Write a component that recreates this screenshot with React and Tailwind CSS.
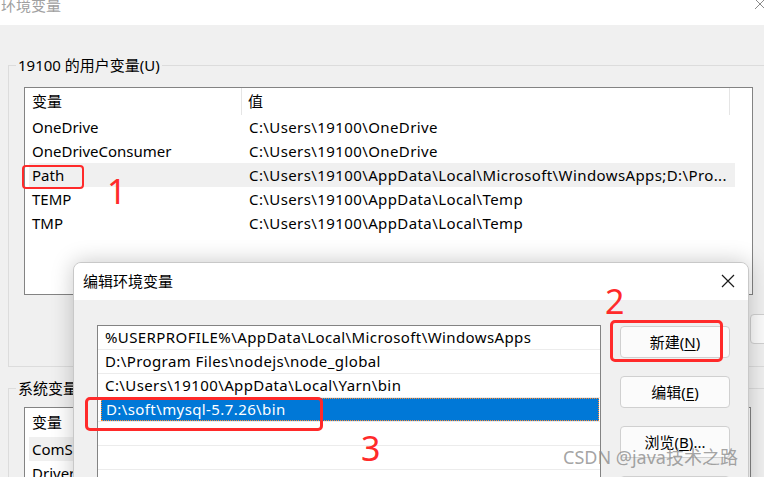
import React from 'react'

const userVars = [
  ['OneDrive', 'C:\\Users\\19100\\OneDrive'],
  ['OneDriveConsumer', 'C:\\Users\\19100\\OneDrive'],
  ['Path', 'C:\\Users\\19100\\AppData\\Local\\Microsoft\\WindowsApps;D:\\Pro...'],
  ['TEMP', 'C:\\Users\\19100\\AppData\\Local\\Temp'],
  ['TMP', 'C:\\Users\\19100\\AppData\\Local\\Temp'],
]

const pathItems = [
  '%USERPROFILE%\\AppData\\Local\\Microsoft\\WindowsApps',
  'D:\\Program Files\\nodejs\\node_global',
  'C:\\Users\\19100\\AppData\\Local\\Yarn\\bin',
  'D:\\soft\\mysql-5.7.26\\bin',
  '',
  '',
]

function WinButton({ label, hot, suffix = '' }) {
  return (
    <button className="w-[110px] h-[32px] rounded-[4px] border border-[#d0d0d0] bg-[#fbfbfb] text-[15px] text-black">
      {label}(<span className="underline underline-offset-2">{hot}</span>){suffix}
    </button>
  )
}

function GroupBox({ label, className, children }) {
  return (
    <div className={`border border-[#dcdcdc] ${className}`}>
      <div className="-mt-[11px] ml-[7px] px-[2px] w-fit bg-[#f0f0f0] text-[15px] leading-[20px] text-black">{label}</div>
      {children}
    </div>
  )
}

export default function App() {
  return (
    <div className="relative w-[764px] h-[477px] overflow-hidden bg-[#f0f0f0] font-['Noto_Sans','Noto_Sans_CJK_SC',sans-serif] text-black">
      {/* background window title */}
      <div className="relative h-[25px] bg-white">
        <div className="relative -top-[6px] pl-[1px] text-[15px] text-[#a0a0a0]">环境变量</div>
        <svg className="absolute left-[752px] -top-[4px]" width="16" height="16" viewBox="0 0 16 16">
          <path d="M3 3 L13 13 M13 3 L3 13" stroke="#8a8a8a" strokeWidth="1" fill="none" />
        </svg>
      </div>

      <div className="w-[820px] pl-[8px] pt-[40px]">
        <GroupBox label="19100 的用户变量(U)" className="h-[302px]">
          <div className="ml-[15px] mt-[12px] w-[729px] h-[208px] border border-[#838383] bg-white text-[15px]">
            <div className="flex h-[27px] items-center">
              <div className="w-[217px] h-full pl-[7px] flex items-center border-r border-[#e5e5e5]">变量</div>
              <div className="w-[488px] h-full pl-[6px] flex items-center border-r border-[#e5e5e5]">值</div>
            </div>
            {userVars.map(([name, value]) => (
              <div key={name} className={`flex h-[24px] items-center ${name === 'Path' ? 'bg-[#f0f0f0]' : ''} w-[706px] ml-[4px]`}>
                <div className="w-[213px] pl-[3px] whitespace-nowrap">{name}</div>
                <div className="pl-[7px] whitespace-nowrap tracking-[0.4px]">{value}</div>
              </div>
            ))}
          </div>
          <div className="flex pl-[741px] mt-[19px]">
            <div className="w-[100px] h-[30px] rounded-[4px] border border-[#d0d0d0] bg-[#fbfbfb]" />
          </div>
        </GroupBox>

        <GroupBox label="系统变量(S)" className="mt-[21px] h-[120px]">
          <div className="ml-[15px] mt-[9px] w-[727px] h-[120px] border border-[#838383] bg-white text-[15px]">
            <div className="flex h-[29px] items-center pl-[7px]">变量</div>
            <div className="h-[24px] ml-[4px] w-[200px] pl-[3px] flex items-center bg-[#f0f0f0]">ComSpec</div>
            <div className="h-[24px] ml-[4px] pl-[3px] flex items-center">DriverData</div>
          </div>
        </GroupBox>
      </div>

      {/* edit dialog */}
      <div className="absolute left-[73px] top-[262px] w-[676px] h-[240px] rounded-t-[8px] border border-[#c8c8c8] bg-[#f0f0f0] overflow-hidden shadow-[0_0_22px_rgba(0,0,0,0.22)]">
        <div className="relative h-[37px] bg-white flex items-center pl-[9px] text-[15px]">
          编辑环境变量
          <svg className="absolute left-[647px] top-[11px]" width="14" height="14" viewBox="0 0 14 14">
            <path d="M1 1 L13 13 M13 1 L1 13" stroke="#1a1a1a" strokeWidth="1.2" fill="none" />
          </svg>
        </div>
        <div className="flex pl-[23px] pt-[25px] gap-[19px]">
          <div className="w-[504px] h-[200px] border border-[#838383] bg-white text-[15px] tracking-[0.4px]">
            {pathItems.map((item, i) => (
              <div key={i} className="h-[24px] border-b border-[#ececec] flex items-center">
                {i === 3 ? (
                  <div className="h-[23px] ml-[3px] mr-[1px] flex-1 flex items-center pl-[4px] bg-[#0078d7] text-white border border-dotted border-[#ff8a30]">{item}</div>
                ) : (
                  <div className="pl-[7px] whitespace-nowrap">{item}</div>
                )}
              </div>
            ))}
          </div>
          <div className="flex flex-col gap-[18px] pt-[1px]">
            <WinButton label="新建" hot="N" />
            <WinButton label="编辑" hot="E" />
            <WinButton label="浏览" hot="B" suffix="..." />
            <WinButton label="删除" hot="D" />
          </div>
        </div>
      </div>

      {/* annotations */}
      <div className="absolute left-[22px] top-[165px] w-[62px] h-[24px] border-2 border-[#ff2a2a] rounded-[4px]" />
      <div className="absolute left-[107px] top-[171px] text-[34px] leading-[40px] text-[#ff2a2a]">1</div>
      <div className="absolute left-[610px] top-[320px] w-[113px] h-[42px] border-[3px] border-[#ff2a2a] rounded-[5px]" />
      <div className="absolute left-[605px] top-[281px] text-[34px] leading-[40px] text-[#ff2a2a]">2</div>
      <div className="absolute left-[85px] top-[397px] w-[238px] h-[34px] border-[3px] border-[#ff2a2a] rounded-[5px]" />
      <div className="absolute left-[361px] top-[428px] text-[34px] leading-[40px] text-[#ff2a2a]">3</div>

      {/* watermark */}
      <div className="absolute left-[563px] top-[444px] text-[18px] text-[#8c8c8c]/80 whitespace-nowrap">CSDN @java技术之路</div>
    </div>
  )
}
